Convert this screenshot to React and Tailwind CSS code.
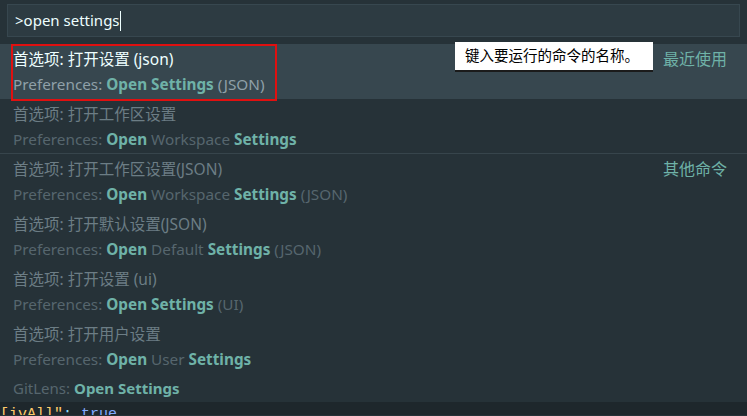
const font = { fontFamily: '"Noto Sans", "Noto Sans CJK SC", sans-serif' }

const items = [
  { zh: "首选项: 打开设置 (json)", parts: [["Preferences: ", 0], ["Open Settings", 1], [" (JSON)", 0]], active: true, right: "最近使用" },
  { zh: "首选项: 打开工作区设置", parts: [["Preferences: ", 0], ["Open", 1], [" Workspace ", 0], ["Settings", 1]], sepAfter: true },
  { zh: "首选项: 打开工作区设置(JSON)", parts: [["Preferences: ", 0], ["Open", 1], [" Workspace ", 0], ["Settings", 1], [" (JSON)", 0]], right: "其他命令" },
  { zh: "首选项: 打开默认设置(JSON)", parts: [["Preferences: ", 0], ["Open", 1], [" Default ", 0], ["Settings", 1], [" (JSON)", 0]] },
  { zh: "首选项: 打开设置 (ui)", parts: [["Preferences: ", 0], ["Open Settings", 1], [" (UI)", 0]] },
  { zh: "首选项: 打开用户设置", parts: [["Preferences: ", 0], ["Open", 1], [" User ", 0], ["Settings", 1]] },
]

function Row({ item }) {
  return (
    <div className={`relative h-[55px] ${item.active ? "bg-[#37474f]" : ""} ${item.sepAfter ? "border-b border-[#37454c]" : ""}`}>
      {item.active && <div className="absolute left-[11px] top-0 h-[57px] w-[266px] border-2 border-[#e01010]" />}
      <div className="pl-[13px] pt-[2px]">
        <div className={`h-[26px] leading-[26px] text-[15.5px] ${item.active ? "text-[#eeffff]" : "text-[#6c7d85]"}`}>{item.zh}</div>
        <div className={`h-[25px] leading-[25px] text-[15.3px] ${item.active ? "text-[#8fa0a8]" : "text-[#56666e]"}`}>
          {item.parts.map(([t, b], i) =>
            b ? <span key={i} className="font-bold text-[#6fb2a8]">{t}</span> : <span key={i}>{t}</span>
          )}
        </div>
      </div>
      {item.right && (
        <div className="absolute right-[20px] top-[2px] text-[16px] leading-[26px] text-[#6fb2a8]">{item.right}</div>
      )}
    </div>
  )
}

export default function App() {
  return (
    <div className="relative h-[416px] w-[747px] overflow-hidden bg-[#263238]" style={font}>
      <div className="px-[7px] pt-[4px] pb-[7px]">
        <div className="flex h-[33px] items-center border border-[#37474f] bg-[#2d3b42] pl-[7px] text-[15px] text-[#eeffff]">
          <span>&gt;open settings</span>
          <span className="h-[20px] w-[1px] bg-[#eeffff]" />
        </div>
      </div>
      {items.map((item, i) => <Row key={i} item={item} />)}
      <div className="flex h-[28px] items-center pl-[13px] text-[15px] text-[#56666e]">
        <span>GitLens:</span><span className="ml-[4px] font-bold text-[#6fb2a8]">Open Settings</span>
      </div>
      <div className="h-[13px] overflow-hidden bg-[#1e272c]" style={{ fontFamily: '"Liberation Mono", monospace' }}>
        <div className="mt-[4px] text-[15px] leading-[18px]">
          <span className="text-[#ffcb6b]">[ivAll"</span><span className="text-[#89ddff]">: </span><span className="text-[#82aaff]">true</span>
        </div>
      </div>
      <div className="absolute left-[455px] top-[42px] flex h-[30px] w-[198px] items-center border-b-2 border-[#1b1b1b] bg-white pl-[10px] text-[14.5px] text-black">
        键入要运行的命令的名称。
      </div>
    </div>
  )
}
